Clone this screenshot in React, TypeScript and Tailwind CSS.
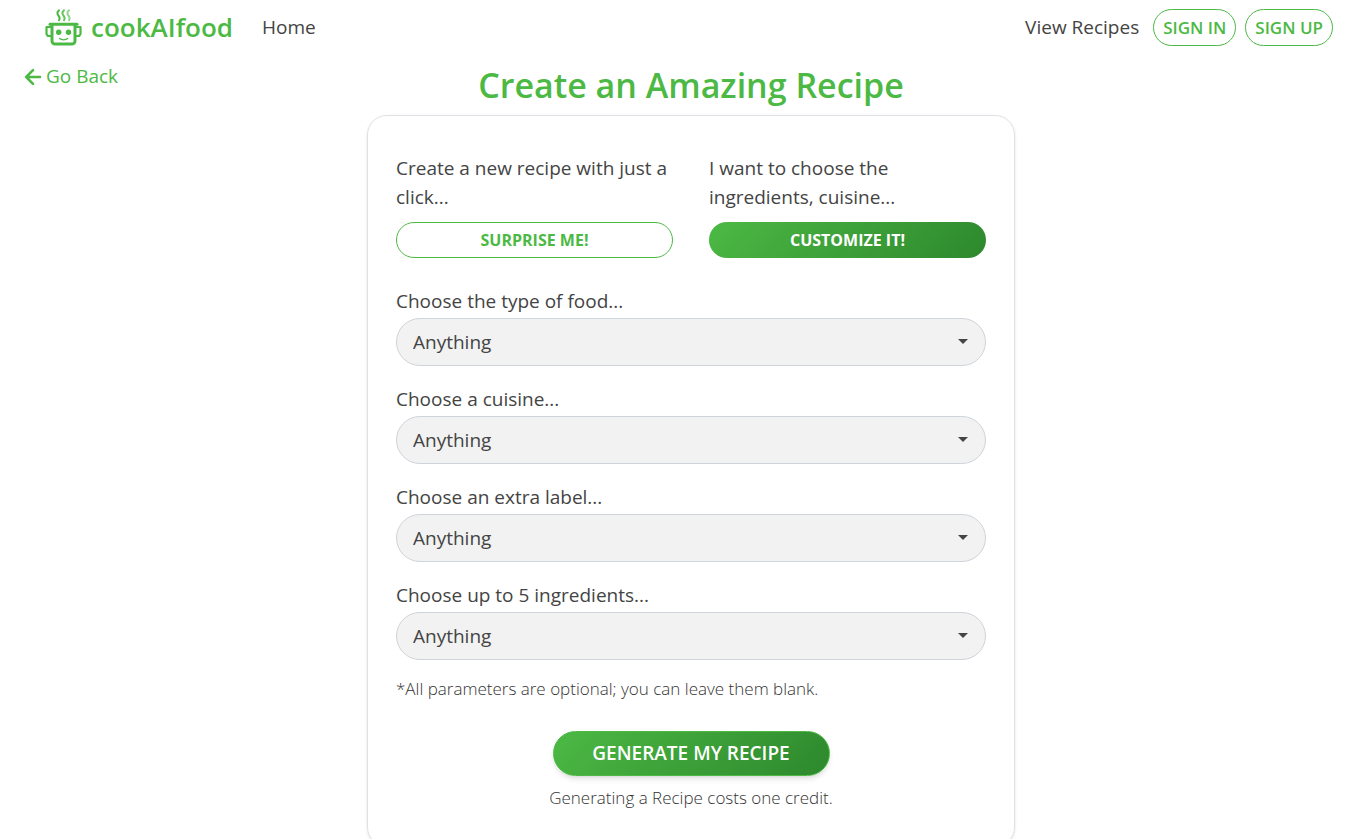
import { useState } from "react";

const FIELDS = [
  { id: "food-type", label: "Choose the type of food...", options: ["Anything", "Breakfast", "Main course", "Dessert"] },
  { id: "cuisine", label: "Choose a cuisine...", options: ["Anything", "Italian", "Mexican", "Japanese"] },
  { id: "extra-label", label: "Choose an extra label...", options: ["Anything", "Vegan", "Gluten free", "Low carb"] },
  { id: "ingredients", label: "Choose up to 5 ingredients...", options: ["Anything", "Chicken", "Rice", "Tomato"] },
];

export default function App() {
  const [customize, setCustomize] = useState(true);

  return (
    <div className="min-h-screen bg-white font-['Open_Sans',sans-serif] text-[19px] leading-[29px] font-normal text-[#444444]">
      <Header />

      <main className="grid grid-cols-[1fr_648px_1fr] pl-[15px]">
        <div className="pt-[7px] pl-[9px]">
          <a href="#" className="inline-flex items-center gap-1 text-[#4cb944]">
            <ArrowLeft />
            Go Back
          </a>
        </div>

        <div>
          <h1 className="pt-1 pb-1 text-center text-[34px] leading-[52px] font-semibold text-[#4cb944]">
            Create an Amazing Recipe
          </h1>

          <section className="rounded-[20px] border border-[#dee2e6] px-7 pt-[38px] pb-9 shadow-sm">
            <div className="grid grid-cols-2 gap-9">
              <div>
                <p className="mb-[10px]">Create a new recipe with just a click...</p>
                <ModeButton active={!customize} onClick={() => setCustomize(false)}>
                  SURPRISE ME!
                </ModeButton>
              </div>
              <div>
                <p className="mb-[10px]">I want to choose the ingredients, cuisine...</p>
                <ModeButton active={customize} onClick={() => setCustomize(true)}>
                  CUSTOMIZE IT!
                </ModeButton>
              </div>
            </div>

            {customize && (
              <div className="mt-[29px] space-y-[19px]">
                {FIELDS.map((field) => (
                  <SelectField key={field.id} {...field} />
                ))}
              </div>
            )}

            <p className="mt-[17px] text-[17px] leading-6 font-light text-[#333333]">
              *All parameters are optional; you can leave them blank.
            </p>

            <div className="mt-[30px] flex flex-col items-center">
              <button
                type="button"
                className="h-[45px] w-[277px] rounded-full border border-[#4cb944] bg-linear-[135deg] from-[#4cb944] to-[#2d882d] text-[19px] font-semibold text-white shadow-md"
              >
                GENERATE MY RECIPE
              </button>
              <p className="mt-[10px] text-[17px] leading-6 font-light text-[#333333]">Generating a Recipe costs one credit.</p>
            </div>
          </section>
        </div>
      </main>
    </div>
  );
}

function Header() {
  return (
    <header className="flex h-[55px] items-center pr-[34px] pl-11">
      <a href="#" className="flex items-center gap-2 text-[26px] font-semibold text-[#4cb944]">
        <Logo />
        cookAIfood
      </a>
      <nav className="ml-[29px] flex flex-1 items-center justify-between">
        <a href="#">Home</a>
        <a href="#">View Recipes</a>
      </nav>
      <div className="ml-[14px] flex gap-[9px]">
        <button type="button" className="h-[37px] rounded-full border border-[#4cb944] px-[9px] text-[17px] font-semibold text-[#4cb944]">
          SIGN IN
        </button>
        <button type="button" className="h-[37px] rounded-full border border-[#4cb944] px-[9px] text-[17px] font-semibold text-[#4cb944]">
          SIGN UP
        </button>
      </div>
    </header>
  );
}

function ModeButton({ active, onClick, children }: { active: boolean; onClick: () => void; children: string }) {
  return (
    <button
      type="button"
      aria-pressed={active}
      onClick={onClick}
      className={`h-9 w-full rounded-full text-[16px] font-bold ${
        active
          ? "bg-linear-[135deg] from-[#4cb944] to-[#2d882d] text-white"
          : "border border-[#4cb944] bg-white text-[#4cb944]"
      }`}
    >
      {children}
    </button>
  );
}

function SelectField({ id, label, options }: { id: string; label: string; options: string[] }) {
  return (
    <div>
      <label htmlFor={id} className="block">
        {label}
      </label>
      <div className="relative mt-[2px]">
        <select
          id={id}
          className="block h-12 w-full appearance-none rounded-full border border-[#ced4da] bg-[#f2f2f2] px-4 outline-none focus:border-[#4cb944]"
        >
          {options.map((option) => (
            <option key={option}>{option}</option>
          ))}
        </select>
        <svg viewBox="0 0 10 5" className="pointer-events-none absolute top-[21px] right-[18px] h-[5px] w-[10px] fill-[#444444]">
          <path d="M0 0h10L5 5z" />
        </svg>
      </div>
    </div>
  );
}

function ArrowLeft() {
  return (
    <svg viewBox="0 0 18 18" className="size-[18px]" fill="none" stroke="currentColor" strokeWidth="2.6" strokeLinecap="round" strokeLinejoin="round">
      <path d="M9 2.2 2.2 9 9 15.8M2.6 9H16" />
    </svg>
  );
}

function Logo() {
  return (
    <svg viewBox="0 0 39 38" className="h-[38px] w-[39px]" fill="none" stroke="#4cb944" aria-hidden="true">
      {/* steam */}
      <g strokeWidth="2" strokeLinecap="round">
        <path d="M15 1.300c-2.600 2.200-1.900 3.600-.6 5.200s1.600 3.200.6 4.700" />
        <path d="M20 1.300c-2.600 2.200-1.900 3.600-.6 5.200s1.600 3.200.6 4.700" opacity="0.85" />
        <path d="M25 1.300c-2.600 2.200-1.900 3.600-.6 5.200s1.600 3.200.6 4.700" opacity="0.6" />
      </g>
      {/* pot */}
      <path d="M6 15.200H33" strokeWidth="3" strokeLinecap="round" />
      <path d="M8 15v17a3 3 0 0 0 3 3h17a3 3 0 0 0 3-3V15" strokeWidth="3" />
      <path d="M7 18H2.500v7l1.500 2h3.500M32 18h4.500v7l-1.500 2h-3.500" strokeWidth="2.200" strokeLinejoin="round" />
      <g fill="#4cb944" stroke="none">
        <circle cx="14.700" cy="23.300" r="2.700" />
        <circle cx="24.500" cy="23.300" r="2.700" />
      </g>
      <path d="M15.500 29.500c2.200 1.700 6 1.700 8.200 0" strokeWidth="1.300" strokeLinecap="round" />
    </svg>
  );
}
